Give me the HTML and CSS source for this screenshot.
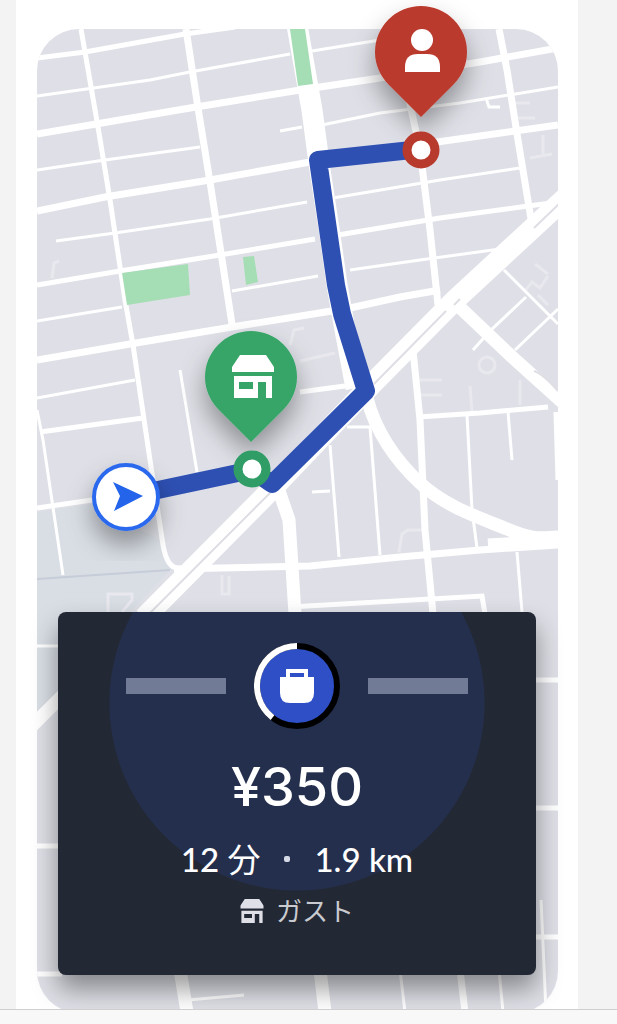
FILE: index.html
```html
<!DOCTYPE html>
<html lang="ja">
<head>
  <meta charset="UTF-8" />
  <meta name="viewport" content="width=device-width, initial-scale=1.0"/>
  <title>配達リクエスト</title>
  <link rel="stylesheet" href="styles.css">
</head>
<body>
  <main class="screen">
    <svg class="map" viewBox="16 0 562 1009" role="img" aria-label="配達ルート">
      <defs>
        <clipPath id="mapShape"><rect x="37" y="29" width="521" height="984" rx="42"/></clipPath>
        <filter id="shadow" x="-50%" y="-50%" width="200%" height="200%">
          <feDropShadow dx="0" dy="14" stdDeviation="13" flood-color="#000" flood-opacity="0.36"/>
        </filter>
        <path id="pin" d="M0 65L-32.5 32.5A46 46 0 1 1 32.5 32.5Z"/>
        <symbol id="store" viewBox="0 0 42 43">
          <path fill-rule="evenodd" d="M8 0H34L42 12V17H0V12ZM2 21H40V43H34V27H26V43H2ZM7 27V34H21V27Z"/>
        </symbol>
      </defs>

      <g clip-path="url(#mapShape)">
        <rect class="land" x="37" y="29" width="521" height="986"/>
        <path class="land-alt" d="M37 512L92 504L160 540L170 570L130 612L37 720Z"/>
        <path class="border-line" d="M37 579L170 570"/>

        <!-- faint buildings -->
        <g class="faint">
          <path d="M418 380H442M418 395H442M470 386L472 412M520 380V405M108 612V594H132V600L122 612M222 575V594H229V576M399 552L402 534L408 530H424M52 278L54 263L59 261M290 345L294 330L304 328M300 361L335 353"/>
          <path d="M515 103H530M515 118H535M530 158L552 154M543 135V156M524 292L532 282L540 288L548 276M535 264L548 274M538 295L548 305"/>
          <circle cx="487" cy="365" r="8"/>
        </g>

        <!-- small streets -->
        <g class="street">
          <path d="M37 96L150 80L190 72L290 54M312 51L380 40"/>
          <path d="M37 170L105 160L200 147M280 131L302 127M322 125L380 113L460 103L558 87"/>
          <path d="M56 241L115 233L210 219L307 202M333 198L440 180L520 168"/>
          <path d="M232 291L318 276M350 270L420 260L500 249M37 321L122 307"/>
          <path d="M37 398L135 380M37 410L43 440L63 575M180 370L197 472"/>
          <path d="M504 270L558 324M473 350L490 331L526 297M515 350L558 309"/>
          <path d="M467 415L472 510L477 548M508 412L512 460M517 552L522 612"/>
          <path d="M347 427H370L380 555M330 445L339 557M312 492L330 491"/>
          <path d="M486 98L489 107H500M188 1000L244 995M400 970L405 1012M499 970L503 1012M541 900L546 1012M37 646H60"/>
        </g>

        <!-- streets -->
        <g class="road">
          <path d="M81 29L98 127L110 200L125 300L133 345L150 460L163 545Q167 568 178 568"/>
          <path d="M37 58L85 52L185 34L235 27"/>
          <path d="M37 285L120 271L220 255L315 239M338 235L440 218L558 202"/>
          <path d="M40 432L143 418M37 508L92 500M300 392L345 386"/>
          <path d="M418 417L480 413L548 407M556 412L558 480M290 607L482 596L485 614"/>
          <path d="M37 846H60M37 974H62M535 680H558M535 808H558M535 937H558"/>
        </g>

        <!-- avenues -->
        <g class="avenue">
          <path d="M186 29L198 108L210 182L232 324"/>
          <path d="M499 29L507 70L518 140L532 225M408 95L420 150L430 230L438 305"/>
          <path d="M37 134L190 108L300 90L380 78L480 62L558 48"/>
          <path d="M37 211L105 197L210 180L310 162M430 143L558 125"/>
          <path d="M37 360L130 344L232 327L307 315L350 308L400 297L440 290"/>
          <path d="M174 569L310 566L400 557L480 550L558 545"/>
          <path d="M413 350L420 420L425 530L433 614M460 970L465 1012"/>
        </g>

        <!-- main roads -->
        <g class="highway">
          <path class="wide" d="M297 25L312 110L320 170L330 235L337 285L345 330L356 388"/>
          <path d="M367 398C375 430 395 460 420 483S475 516 507 529S540 537 564 537"/>
          <path d="M450 298L510 355L562 402M277 485L289 520L295 614M488 545L558 541M320 970L325 1012M180 970L187 1012"/>
          <path class="wide" d="M574 190L455 300L372 384L272 489L144 618"/>
          <path d="M90 668L30 728"/>
        </g>
        <path class="median" d="M560 203L534 228M460 299L454 305M446 311L374 384M272 491L147 616M534 371Q542 373 558 391"/>

        <g class="park">
          <path d="M290 29H305L313 84L298 86Z"/>
          <path d="M122 273L188 264L190 295L127 305Z"/>
          <path d="M243 257L254 256L258 282L246 285Z"/>
          <path d="M547 1000L555 989L552 998Z"/>
        </g>
      </g>

      <path class="route" d="M125 497L252 470L272 484L366 391L342 314L336 285L318 160L421 149"/>

      <g filter="url(#shadow)">
        <use href="#pin" x="421" y="52" class="pin-customer"/>
      </g>
      <circle class="white" cx="422" cy="40" r="11"/>
      <path class="white" d="M405 72V67Q405 54 418 54H427Q440 54 440 67V72Z"/>

      <g filter="url(#shadow)">
        <use href="#pin" x="251" y="377" class="pin-store"/>
      </g>
      <use href="#store" class="white" x="232" y="355" width="42" height="43"/>

      <circle class="stop stop-customer" cx="421" cy="150" r="14"/>
      <circle class="stop stop-store" cx="252" cy="469" r="14"/>

      <g filter="url(#shadow)">
        <circle class="position" cx="126" cy="497" r="32"/>
      </g>
      <path class="arrow" d="M143 496L113 482L120 496L114 511Z"/>
    </svg>

    <section class="offer">
      <div class="offer-head">
        <span class="bar"></span>
        <svg class="timer" viewBox="0 0 86 86" aria-hidden="true">
          <circle cx="43" cy="43" r="40" fill="#2e4fc6" stroke="#000" stroke-width="6"/>
          <path d="M43 3A40 40 0 0 0 18.5 74.6" fill="none" stroke="#fff" stroke-width="6"/>
          <path d="M32 34V26H54V34H60V50Q60 60 50 60H36Q26 60 26 50V34ZM36 30V34H50V30Z" fill="#fff" fill-rule="evenodd"/>
        </svg>
        <span class="bar"></span>
      </div>
      <p class="price">¥350</p>
      <p class="trip"><span>12 <span class="unit">分</span></span><span class="dot"></span><span>1.9 km</span></p>
      <p class="shop">
        <svg class="shop-icon" viewBox="0 0 42 43" aria-hidden="true"><use href="#store"/></svg>
        ガスト
      </p>
    </section>
  </main>
  <footer class="bottom"></footer>
</body>
</html>
```
FILE: styles.css
```css
*, *::before, *::after { box-sizing: border-box; }

body {
  font-family: Lato, "Noto Sans CJK JP", sans-serif;
  background-color: #f3f3f3;
  color: #fff;
  margin: 0;
}

.screen {
  display: grid;
  margin: 0 39px 0 16px;
  background-color: #fff;
  overflow: hidden;
}

.map, .offer {
  grid-area: 1 / 1;
}

.map {
  display: block;
  width: 100%;
  height: auto;
}

/* map */
.land { fill: #dfe0e7; }
.land-alt { fill: #d9dee5; }
.park { fill: #a5ddb4; }
.white { fill: #fff; }

.street, .road, .avenue, .highway, .faint, .median, .border-line {
  fill: none;
  stroke: #fff;
}

.street { stroke-width: 3; }
.road { stroke-width: 5; }
.avenue { stroke-width: 7; }
.highway { stroke-width: 13; }
.highway .wide { stroke-width: 21; }
.faint { stroke: #e8e8ee; stroke-width: 3; }
.median { stroke: #dedee4; stroke-width: 2; }
.border-line { stroke: #c6cdd8; stroke-width: 2; }

.route {
  fill: none;
  stroke: #2e50b3;
  stroke-width: 18;
  stroke-linejoin: round;
}

.pin-customer { fill: #ba3b2d; }
.pin-store { fill: #38a568; }

.stop {
  fill: #fff;
  stroke-width: 9;
}

.stop-customer { stroke: #b83a2d; }
.stop-store { stroke: #309c66; }

.position {
  fill: #fff;
  stroke: #2b69ee;
  stroke-width: 4;
}

.arrow { fill: #2464ea; }

/* offer card */
.offer {
  position: relative;
  align-self: end;
  display: flex;
  flex-direction: column;
  align-items: center;
  margin: 0 42px 34px;
  padding: 31px 20px 42px;
  background-color: #222834;
  border-radius: 8px;
  box-shadow: 0 14px 26px rgba(0, 0, 0, 0.4);
}

.offer::before {
  content: "";
  position: absolute;
  inset: 0;
  border-radius: 8px;
  background: radial-gradient(circle at 50% 91px, #242f4e 187px, transparent 188px);
}

.offer > * {
  position: relative;
  margin: 0;
}

.offer-head {
  display: flex;
  align-items: center;
  gap: 28px;
}

.bar {
  width: 100px;
  height: 16px;
  background-color: #727b95;
}

.timer {
  width: 86px;
  height: 86px;
}

.price {
  margin-top: 24px;
  font-family: Inter, sans-serif;
  font-size: 54px;
  line-height: 68px;
  font-weight: 500;
}

.trip {
  display: flex;
  align-items: center;
  margin-top: 14px;
  gap: 24px;
  font-size: 33px;
  line-height: 48px;
  font-weight: 500;
}

.unit { font-weight: 400; }

.dot {
  width: 6px;
  height: 6px;
  border-radius: 2px;
  background-color: #d5d9e6;
}

.shop {
  display: flex;
  align-items: center;
  margin-top: 6px;
  gap: 12px;
  font-size: 26px;
  line-height: 44px;
  color: #c9cbd1;
}

.shop-icon {
  width: 24px;
  height: 24px;
  fill: #dfdfe8;
}

.bottom {
  height: 15px;
  background-color: #f8f8f8;
  border-top: 1px solid #cfcfcf;
}
```
